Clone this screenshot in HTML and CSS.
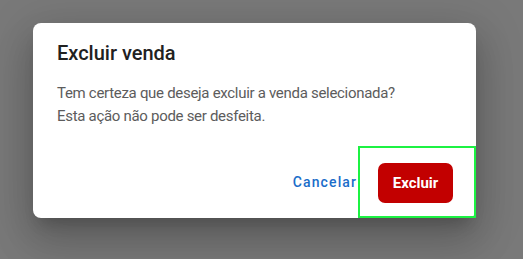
FILE: index.html
```html
<!DOCTYPE html>
<html lang="pt-BR">
<head>
<meta charset="utf-8">
<title>Excluir venda</title>
<link rel="stylesheet" href="styles.css">
</head>
<body>
<div class="backdrop">
  <div class="dialog" role="dialog">
    <h2 class="dialog-title">Excluir venda</h2>
    <div class="dialog-content">
      <p>Tem certeza que deseja excluir a venda selecionada?<br>Esta ação não pode ser desfeita.</p>
    </div>
    <div class="dialog-actions">
      <button class="btn-text">Cancelar</button>
      <div class="highlight">
        <button class="btn-danger">Excluir</button>
      </div>
    </div>
  </div>
</div>
</body>
</html>
```
FILE: styles.css
```css
html, body {
  margin: 0;
  padding: 0;
  height: 100%;
}
body {
  background: #797979;
  font-family: Roboto, "Liberation Sans", sans-serif;
}
.backdrop {
  padding: 23px 0 0 33px;
}
.dialog {
  width: 443px;
  height: 195px;
  box-sizing: border-box;
  background: #fff;
  border-radius: 8px;
  display: flex;
  flex-direction: column;
  box-shadow: 0 11px 15px -7px rgba(0,0,0,.2), 0 24px 38px 3px rgba(0,0,0,.14), 0 9px 46px 8px rgba(0,0,0,.12);
}
.dialog-title {
  margin: 0;
  padding: 14px 24px 0;
  font-size: 20px;
  line-height: 32px;
  font-weight: 500;
  color: #212121;
}
.dialog-content {
  padding: 13px 24px 0;
}
.dialog-content p {
  margin: 0;
  font-size: 15px;
  line-height: 23px;
  letter-spacing: -0.3px;
  color: #5c5c5c;
}
.dialog-actions {
  margin-top: auto;
  display: flex;
  justify-content: flex-end;
  align-items: center;
}
.btn-text {
  background: none;
  border: 0;
  padding: 6px 0 6px 8px;
  margin-right: 1px;
  font-family: inherit;
  font-size: 14px;
  font-weight: 500;
  letter-spacing: 1.1px;
  color: #1a6dc9;
}
.highlight {
  width: 118px;
  height: 72px;
  box-sizing: border-box;
  border: 2px solid #1cf243;
  padding: 15px 0 0 18px;
}
.btn-danger {
  width: 75px;
  height: 40px;
  border: 0;
  border-radius: 7px;
  background: #c20000;
  color: #fff;
  font-family: inherit;
  font-size: 15px;
  font-weight: 700;
  padding: 0;
}
```
